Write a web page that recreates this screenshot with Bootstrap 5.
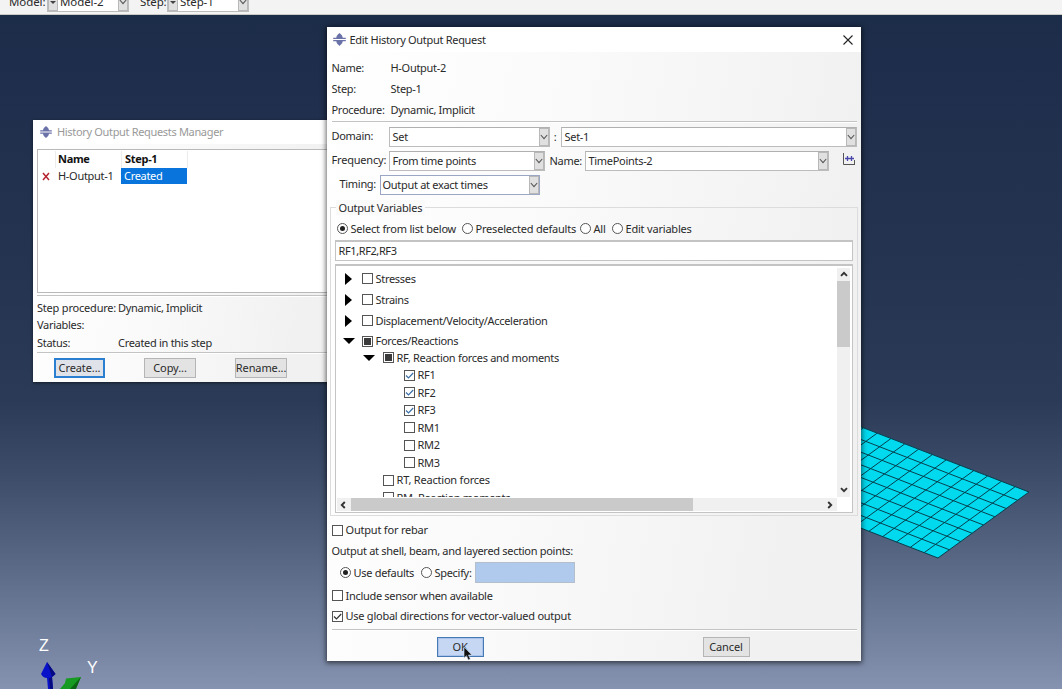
<!DOCTYPE html>
<html lang="en">
<head>
<meta charset="utf-8">
<title>Edit History Output Request</title>
<link href="https://cdn.jsdelivr.net/npm/bootstrap@5.3.0/dist/css/bootstrap.min.css" rel="stylesheet">
<style>
body{width:1062px;height:689px;overflow:hidden;position:relative;font:11px/16px "Noto Sans","Open Sans",sans-serif;letter-spacing:-.3px;color:#2a2a2a;white-space:nowrap;
background:linear-gradient(#1b2d48 0,#1e2d4b 60px,#243450 250px,#2b3b57 400px,#3c4c69 475px,#53627f 545px,#6b7a97 615px,#8592b0 689px)}
.topbar{height:15px;background:#f3f3f3;border-bottom:1px solid #c9cac6;overflow:hidden}
.topbar>div{margin-top:-8px;height:20px;font-size:11.5px;letter-spacing:-.1px}
.scene{position:absolute;left:0;top:0}
.win{position:absolute;background:linear-gradient(100deg,#fff 0,#fafafa 40%,#f1f1f2 85%)}
.manager{left:33px;top:120px;width:310px;height:262px;box-shadow:0 1px 3px #0008}
.dialog-win{left:326.500px;top:27px;width:534.500px;height:634px;box-shadow:0 1px 5px 1px #0009}
.titlebar{height:25px;background:#fff;padding-left:6px}
.manager .titlebar{height:24px;padding-left:7px;color:#999}
.body-pad{padding:5px 4px 0 5px}
.r21{height:21px}.r20{height:20px}.r17{height:17.5px}
.sep{height:2px;background:#c3c3c3;border-bottom:1px solid #fff}
.combo{height:20px;background:#fff;border:1px solid #bcbcbc;border-top-color:#b0b0b0;padding-left:3px}
.combo i{width:10px;height:18px;background:#e0e0e0;border:1px solid #b8b8b8;display:flex;align-items:center;justify-content:center}
.lab{flex:none;margin-top:-2px}
.group{border:1px solid #dcdcdc;height:309px;margin:12px -1px 0 -2px;padding:0 4px 0 4px}
.group-title{margin-top:-8px;height:16px;letter-spacing:-.2px}
.group-title span{background:#fafafa;padding:0 3px}
.field{height:21px;background:#fff;border:1px solid #c4c4c4;border-top-width:2px;padding-left:3px}
.list{height:249px;background:#fff;border:1px solid #c4c4c4;border-top-width:2px;margin-top:3px;position:relative}
.tree{height:231px;overflow:hidden;padding-top:2px}
.box{width:11px;height:11px;border:1px solid #555;background:#fff;display:inline-flex;align-items:center;justify-content:center;flex:none;margin-right:3px}
.box.part:after{content:"";width:7px;height:7px;background:#3b3b3b}
.rad{width:11px;height:11px;border:1px solid #555;border-radius:50%;background:#fff;display:inline-flex;align-items:center;justify-content:center;flex:none;margin-right:3px}
.rad.on:after{content:"";width:5px;height:5px;border-radius:50%;background:#222}
.vbar{position:absolute;right:2px;top:2px;width:13px;height:229px;background:#f0f0f0}
.hbar{position:absolute;left:1px;bottom:1px;width:500px;height:13px;background:#f0f0f0}
.thumb{background:#cacaca}
.btn-x{height:20px;border:1px solid #b5b5b5;background:#e3e3e3;display:flex;align-items:center;justify-content:center;letter-spacing:-.1px}
.btn-x.hot{border:2px solid #2a7fd0;background:#dfe2e8}
.btn-x.ok{border:1px solid #4779b4;background:#c5d7f3;box-shadow:inset 0 0 0 1px #a9c3ea}
.mlist{margin-left:4px;height:144px;background:#fff;border:1px solid #b9b9b9;border-right:0;padding-top:1px}
.sel{background:#0874dc;color:#fff}
.c0{width:17px}.c1{width:66px}.c2{width:66px;padding-left:3px}
.head{color:#111}
.head .c1,.head .c2{border-left:1px solid #ececec}
</style>
</head>
<body>
<svg width="0" height="0" class="position-absolute">
<symbol id="app" viewBox="0 0 12 12"><path d="M3 4.300C3.400 2 4.500 1.500 6 0c1.500 1.500 2.600 2 3 4.300h2.800v1.300H.2V4.300zM3 7.700C3.400 10 4.500 10.500 6 12c1.500-1.500 2.600-2 3-4.300h2.800V6.400H.2v1.300z" fill="#6a72a8"/></symbol>
<symbol id="dn" viewBox="0 0 8 6"><path d="M.8 1L4 4.600 7.200 1" fill="none" stroke="#555" stroke-width="1.100"/></symbol>
<symbol id="ar" viewBox="0 0 8 6"><path d="M1 1.200L4 4.200 7 1.200" fill="none" stroke="#333" stroke-width="1.900"/></symbol>
<symbol id="ck" viewBox="0 0 9 9"><path d="M1 4.500L3.500 7 8.200 2" fill="none" stroke="currentColor" stroke-width="1.200"/></symbol>
</svg>
<div class="topbar"><div class="d-flex align-items-center">
<span style="width:38px;margin-left:9px">Model:</span>
<div class="combo d-flex align-items-center justify-content-between p-0" style="width:82px"><i><svg width="6" height="5"><path d="M0 1h6L3 4z" fill="#444"/></svg></i><span class="flex-fill" style="padding-left:2px">Model-2</span><i><svg width="8" height="6"><use href="#dn"/></svg></i></div>
<span style="width:27px;margin-left:11px">Step:</span>
<div class="combo d-flex align-items-center p-0" style="width:82px"><i><svg width="6" height="5"><path d="M0 1h6L3 4z" fill="#444"/></svg></i><span class="flex-fill" style="padding-left:2px">Step-1</span><i><svg width="8" height="6"><use href="#dn"/></svg></i></div>
</div></div>

<svg class="scene" width="1062" height="689">
<g transform="matrix(-13.8 -5.350 -11.380 8.250 1029 492)"><path fill="#00d9ee" stroke="#06404f" stroke-width="1" vector-effect="non-scaling-stroke" d="M0 0H14V8H0zM0 1H14M0 2H14M0 3H14M0 4H14M0 5H14M0 6H14M0 7H14M1 0V8M2 0V8M3 0V8M4 0V8M5 0V8M6 0V8M7 0V8M8 0V8M9 0V8M10 0V8M11 0V8M12 0V8M13 0V8"/></g>
<text x="39" y="651" font-size="16" letter-spacing="0" fill="#fff" font-family="Liberation Sans">Z</text>
<text x="87" y="673" font-size="16" letter-spacing="0" fill="#fff" font-family="Liberation Sans">Y</text>
<path d="M47 662L41 674Q43 678 47 678L48 689H53L52 677 55.500 674z" fill="#0a12c9"/><path d="M47 662L52 677 55.500 674zM49 678l1 11h3l-1-12z" fill="#050a80"/>
<path d="M81 677L66 678.500 65 683 60 689H75z" fill="#169a21"/><path d="M81 677L70 689h6z" fill="#0b6414"/>
</svg>

<div class="win manager">
<div class="titlebar d-flex align-items-center"><svg width="12" height="12" class="me-1"><use href="#app"/></svg><span style="margin-left:1px;letter-spacing:-.33px">History Output Requests Manager</span></div>
<div style="height:5px"></div>
<div class="mlist">
<div class="d-flex head fw-bold" style="height:17px;line-height:15px"><span class="c0"></span><span class="c1" style="padding-left:2px">Name</span><span class="c2" style="padding-left:3px">Step-1</span><span style="border-left:1px solid #ececec"></span></div>
<div class="d-flex" style="height:16px;line-height:15px"><span class="c0" style="padding-left:4px"><svg width="8" height="9" style="margin-top:-2px"><path d="M1 1l6 7M7 1L1 8" stroke="#b5232f" stroke-width="1.500"/></svg></span><span class="c1" style="padding-left:3px">H-Output-1</span><span class="c2 sel">Created</span></div>
</div>
<div class="sep" style="margin:2px 0 2px 4px"></div>
<div style="padding-left:4px">
<div class="d-flex align-items-center r17"><span style="width:81px;letter-spacing:-.2px">Step procedure:</span>Dynamic, Implicit</div>
<div class="d-flex align-items-center r17">Variables:</div>
<div class="d-flex align-items-center r17"><span style="width:81px">Status:</span>Created in this step</div>
<div class="sep" style="margin-top:0"></div>
<div class="d-flex" style="margin:4px 0 0 17px;gap:39px"><div class="btn-x hot" style="width:51px">Create...</div><div class="btn-x" style="width:52px">Copy...</div><div class="btn-x" style="width:52px">Rename...</div></div>
</div></div>

<div class="win dialog-win">
<div class="titlebar d-flex align-items-center"><svg width="13" height="13" class="me-1"><use href="#app"/></svg><span class="flex-fill">Edit History Output Request</span><svg width="10" height="10" style="margin-right:8px"><path d="M.5.5l9 9M9.500.5l-9 9" stroke="#222" stroke-width="1.100"/></svg></div>
<div class="body-pad">
<div class="d-flex align-items-center r21"><span style="width:59px">Name:</span>H-Output-2</div>
<div class="d-flex align-items-center r21"><span style="width:59px">Step:</span>Step-1</div>
<div class="d-flex align-items-center r21"><span style="width:59px">Procedure:</span>Dynamic, Implicit</div>
<div class="sep" style="margin-top:1px"></div>
<div class="d-flex align-items-center" style="margin-top:4px"><span class="lab" style="width:57px">Domain:</span><div class="combo d-flex align-items-center justify-content-between" style="width:161px">Set<i><svg width="8" height="6"><use href="#dn"/></svg></i></div><span class="text-center" style="width:11px">:</span><div class="combo d-flex align-items-center justify-content-between" style="width:296px">Set-1<i><svg width="8" height="6"><use href="#dn"/></svg></i></div></div>
<div class="d-flex align-items-center" style="margin-top:4px"><span class="lab" style="width:57px;letter-spacing:-.2px">Frequency:</span><div class="combo d-flex align-items-center justify-content-between" style="width:156px">From time points<i><svg width="8" height="6"><use href="#dn"/></svg></i></div><span style="width:36px;margin-left:5px">Name:</span><div class="combo d-flex align-items-center justify-content-between" style="width:244px;margin-left:-1px">TimePoints-2<i><svg width="8" height="6"><use href="#dn"/></svg></i></div>
<svg width="13" height="13" style="margin:-4px 0 0 13px"><path d="M1.500 0v11.500H13M12.500 7v5" fill="none" stroke="#555"/><path d="M3 5.500h9M5.500 3v5M9.500 3v5" stroke="#4a48a8" stroke-width="1.300"/></svg></div>
<div class="d-flex align-items-center" style="margin-top:4px"><span class="lab" style="width:40px;margin-left:8px">Timing:</span><div class="combo d-flex align-items-center justify-content-between" style="width:160px;border-color:#9aa6c4;padding-left:2px">Output at exact times<i><svg width="8" height="6"><use href="#dn"/></svg></i></div></div>

<div class="group">
<div class="group-title"><span style="margin-left:1px">Output Variables</span></div>
<div class="d-flex align-items-center" style="height:24px;padding:1px 0 0 2px;letter-spacing:-.2px"><span class="rad on"></span><span style="width:111px">Select from list below</span><span class="rad"></span><span style="width:104px">Preselected defaults</span><span class="rad"></span><span style="width:18px">All</span><span class="rad"></span>Edit variables</div>
<div class="field d-flex align-items-center" style="letter-spacing:-.4px">RF1,RF2,RF3</div>
<div class="list">
<div class="tree">
<div class="d-flex align-items-center r21 ps-2"><svg width="18" height="12"><path d="M1 0l7 6-7 6z"/></svg><span class="box"></span>Stresses</div>
<div class="d-flex align-items-center r21 ps-2"><svg width="18" height="12"><path d="M1 0l7 6-7 6z"/></svg><span class="box"></span>Strains</div>
<div class="d-flex align-items-center r21 ps-2"><svg width="18" height="12"><path d="M1 0l7 6-7 6z"/></svg><span class="box"></span>Displacement/Velocity/Acceleration</div>
<div class="d-flex align-items-center r20 ps-2"><svg width="18" height="12" overflow="visible"><path d="M-1 3h12L5 9z"/></svg><span class="box part"></span>Forces/Reactions</div>
<div class="d-flex align-items-center r17" style="padding-left:28px;margin-top:-2px"><svg width="19" height="12" overflow="visible"><path d="M-1 3h12L5 9z"/></svg><span class="box part"></span>RF, Reaction forces and moments</div>
<div class="d-flex align-items-center r17" style="padding-left:68px"><span class="box"><svg width="9" height="9" color="#3a6fa8"><use href="#ck"/></svg></span>RF1</div>
<div class="d-flex align-items-center r17" style="padding-left:68px"><span class="box"><svg width="9" height="9" color="#3a6fa8"><use href="#ck"/></svg></span>RF2</div>
<div class="d-flex align-items-center r17" style="padding-left:68px"><span class="box"><svg width="9" height="9" color="#3a6fa8"><use href="#ck"/></svg></span>RF3</div>
<div class="d-flex align-items-center r17" style="padding-left:68px"><span class="box"></span>RM1</div>
<div class="d-flex align-items-center r17" style="padding-left:68px"><span class="box"></span>RM2</div>
<div class="d-flex align-items-center r17" style="padding-left:68px"><span class="box"></span>RM3</div>
<div class="d-flex align-items-center r17" style="padding-left:47px;letter-spacing:-.2px"><span class="box"></span>RT, Reaction forces</div>
<div class="d-flex align-items-center r17" style="padding-left:47px"><span class="box"></span>RM, Reaction moments</div>
</div>
<div class="vbar d-flex flex-column align-items-center"><svg width="8" height="6" style="margin:3px 0 4px;transform:rotate(180deg)"><use href="#ar"/></svg><div class="thumb w-100" style="height:66px"></div><svg width="8" height="6" style="margin-top:auto;margin-bottom:4px"><use href="#ar"/></svg></div>
<div class="hbar d-flex align-items-center"><svg width="8" height="6" style="margin:0 4px 0 2px;transform:rotate(90deg)"><use href="#ar"/></svg><div class="thumb h-100" style="width:342px"></div><svg width="8" height="6" style="margin-left:auto;margin-right:3px;transform:rotate(-90deg)"><use href="#ar"/></svg></div>
</div>
</div>

<div class="d-flex align-items-center r20" style="margin-top:4px;letter-spacing:-.2px"><span class="box"></span>Output for rebar</div>
<div class="d-flex align-items-center r21">Output at shell, beam, and layered section points:</div>
<div class="d-flex align-items-center" style="height:23px;padding-left:8px"><span class="rad on"></span><span style="width:67px">Use defaults</span><span class="rad"></span><span style="width:40px">Specify:</span><div style="width:100px;height:21px;background:#afcaed;border:1px solid #b5bfcc"></div></div>
<div class="d-flex align-items-center r21" style="margin-top:1px"><span class="box"></span>Include sensor when available</div>
<div class="d-flex align-items-center r20" style="letter-spacing:-.25px"><span class="box"><svg width="9" height="9" color="#333"><use href="#ck"/></svg></span>Use global directions for vector-valued output</div>
<div class="sep" style="margin-top:3px"></div>
<div class="d-flex" style="margin:6px 0 0 105px;gap:219px"><div class="btn-x ok" style="width:47px">OK</div><div class="btn-x" style="width:47px">Cancel</div></div>
</div></div>
<svg class="position-absolute" style="left:463px;top:646px" width="10" height="15"><path d="M1 1v11l2.500-2.300L5.300 14l2-1-1.800-4H9z" fill="#111" stroke="#dde6f5" stroke-width=".6"/></svg>
</body>
</html>
